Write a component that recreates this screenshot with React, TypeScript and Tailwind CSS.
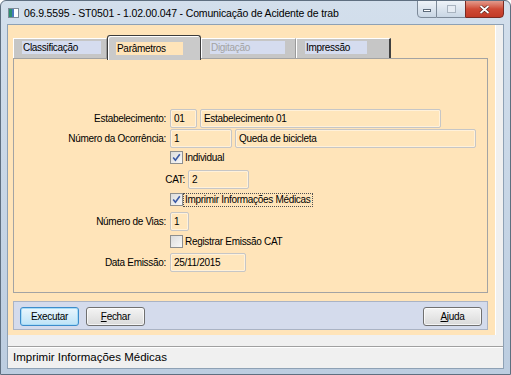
import React from 'react';

const formFont = "font-['Liberation_Sans',Arial,sans-serif] text-[10px] tracking-[-0.3px] text-black";

function Field({ className, value }: { className: string; value: string }) {
  return (
    <div
      className={`h-[19px] shrink-0 border border-[#c6c6c6] rounded-[2px] bg-[#ffe6bc] px-[3px] flex items-center shadow-[inset_0_0_0_1px_rgba(255,255,255,0.45)] ${className}`}
    >
      {value}
    </div>
  );
}

function CheckBox({ checked }: { checked: boolean }) {
  return (
    <div className="w-[13px] h-[13px] shrink-0 border border-[#8e8f8f] bg-gradient-to-br from-[#dcdcdc] to-[#f8f8f8] flex items-center justify-center">
      {checked && (
        <svg width="9" height="9" viewBox="0 0 9 9">
          <path d="M1.2 4.6 L3.4 7.2 L7.8 1.2" fill="none" stroke="#3b5aa5" strokeWidth="1.6" />
        </svg>
      )}
    </div>
  );
}

function Tab({ label, width, labelWidth, disabled, last }: { label: string; width: string; labelWidth: string; disabled?: boolean; last?: boolean }) {
  return (
    <div
      className={`${width} h-[20px] mt-[3px] bg-[#c6c6c6] border-l border-t border-l-white border-t-white ${last ? 'border-r-2 border-r-[#404040]' : 'border-r border-r-[#9a9a9a]'} pl-[8px] pt-[2px]`}
    >
      <div className={`${labelWidth} h-[13px] bg-[#d5dcef] flex items-center pl-[1px] ${disabled ? 'text-[#a3a3a3]' : 'text-black'}`}>
        {label}
      </div>
    </div>
  );
}

function WinButton({ label, mnemonic, focused }: { label: string; mnemonic?: boolean; focused?: boolean }) {
  return (
    <div
      className={`w-[59px] h-[19px] rounded-[3px] border flex items-center justify-center ${
        focused
          ? 'border-[#3c8ccb] bg-gradient-to-b from-[#eaf6fd] to-[#bde3f7] shadow-[inset_0_0_0_1px_#a7dcf6]'
          : 'border-[#707070] bg-gradient-to-b from-[#f4f4f4] to-[#dadada] shadow-[inset_0_0_0_1px_rgba(255,255,255,0.7)]'
      }`}
    >
      {mnemonic ? (
        <span>
          <span className="underline">{label[0]}</span>
          {label.slice(1)}
        </span>
      ) : (
        label
      )}
    </div>
  );
}

export default function App() {
  return (
    <div className="w-[511px] h-[375px] bg-gradient-to-b from-[#d3dfec] to-[#bccde0] border border-[#5f6f80] rounded-t-[6px] flex flex-col overflow-hidden">
      {/* title bar */}
      <div className="h-[23px] flex items-start shrink-0">
        <div className="ml-[7px] mt-[7px] w-[11px] h-[10px] border border-[#7f8c99] bg-white flex">
          <div className="w-[3px] h-full bg-[#2f8f6f]" />
          <div className="w-[2px] h-full bg-[#4a78c0]" />
        </div>
        <div className="ml-[5px] mt-[5px] font-['Liberation_Sans',Arial,sans-serif] text-[10.5px] tracking-[-0.15px] text-black">
          06.9.5595 - ST0501 - 1.02.00.047 - Comunicação de Acidente de trab
        </div>
        <div className="ml-auto mr-[6px] -mt-[1px] flex h-[18px]">
          <div className="w-[20px] h-full border border-[#7d8a99] rounded-bl-[4px] bg-gradient-to-b from-[#eef3f8] to-[#c9d6e4] flex items-center justify-center">
            <div className="w-[8px] h-[3px] border border-[#5c6a7a] bg-white mt-[3px]" />
          </div>
          <div className="w-[28px] h-full border-y border-[#7d8a99] bg-gradient-to-b from-[#eef3f8] to-[#c9d6e4] flex items-center justify-center">
            <div className="w-[9px] h-[8px] border border-[#a9b4c0] bg-[#e6ecf3]" />
          </div>
          <div className="w-[39px] h-full border border-[#7a2a22] rounded-br-[4px] bg-gradient-to-b from-[#e29a8c] via-[#cf4a36] to-[#c23a26] flex items-center justify-center">
            <svg width="11" height="9" viewBox="0 0 11 9">
              <path d="M1.5 1 L9.5 8 M9.5 1 L1.5 8" stroke="#4a1a14" strokeWidth="3" />
              <path d="M1.5 1 L9.5 8 M9.5 1 L1.5 8" stroke="#ffffff" strokeWidth="1.8" />
            </svg>
          </div>
        </div>
      </div>

      {/* client area */}
      <div className="mx-[6px] h-[345px] border border-[#8ea1b5] bg-[#f0f0f0] flex flex-col">
        <div className="h-[310px] flex shrink-0">
          <div className={`w-[487px] h-full bg-[#ffe4b9] pl-[5px] pt-[10px] flex flex-col ${formFont}`}>
            {/* tabs */}
            <div className="h-[23px] flex relative z-10">
              <Tab label="Classificação" width="w-[94px]" labelWidth="w-[79px]" />
              <div className="w-[94px] h-[25px] bg-[#cacaca] border border-[#3c3c3c] border-b-0 rounded-t-[3px] shadow-[inset_1px_1px_0_#ffffff] pl-[8px] pt-[6px]">
                <div className="w-[67px] h-[13px] bg-[#ffe4b9] flex items-center pl-[1px]">Parâmetros</div>
              </div>
              <Tab label="Digitação" width="w-[95px]" labelWidth="w-[75px]" disabled />
              <Tab label="Impressão" width="w-[95px]" labelWidth="w-[62px]" last />
            </div>

            {/* panel */}
            <div className="w-[475px] h-[235px] border border-[#a3a3a3] pt-[50px] flex flex-col shrink-0">
              <div className="h-[19px] flex items-center">
                <div className="w-[152px] text-right">Estabelecimento:</div>
                <Field className="ml-[4px] w-[27px]" value="01" />
                <Field className="ml-[3px] w-[241px]" value="Estabelecimento 01" />
              </div>
              <div className="h-[19px] mt-[1px] flex items-center">
                <div className="w-[152px] text-right">Número da Ocorrência:</div>
                <Field className="ml-[4px] w-[62px]" value="1" />
                <Field className="ml-[3px] w-[241px]" value="Queda de bicicleta" />
              </div>
              <div className="h-[19px] flex items-center pl-[156px]">
                <CheckBox checked />
                <span className="ml-[2px]">Individual</span>
              </div>
              <div className="h-[19px] mt-[3px] flex items-center">
                <div className="w-[171px] text-right">CAT:</div>
                <Field className="ml-[3px] w-[61px]" value="2" />
              </div>
              <div className="h-[21px] flex items-center pl-[156px]">
                <CheckBox checked />
                <span className="ml-[0px] px-[1px] border border-dotted border-[#505050] leading-[12px]">Imprimir Informações Médicas</span>
              </div>
              <div className="h-[19px] mt-[2px] flex items-center">
                <div className="w-[152px] text-right">Número de Vias:</div>
                <Field className="ml-[4px] w-[19px]" value="1" />
              </div>
              <div className="h-[19px] mt-[1px] flex items-center pl-[156px]">
                <CheckBox checked={false} />
                <span className="ml-[2px]">Registrar Emissão CAT</span>
              </div>
              <div className="h-[19px] mt-[2px] flex items-center">
                <div className="w-[152px] text-right">Data Emissão:</div>
                <Field className="ml-[4px] w-[76px]" value="25/11/2015" />
              </div>
            </div>

            {/* buttons */}
            <div className="w-[475px] h-[29px] mt-[8px] border border-[#aab3c4] bg-[#d4dbec] flex items-start pt-[5px] pl-[6px] pr-[5px] shrink-0">
              <WinButton label="Executar" focused />
              <div className="ml-[7px]">
                <WinButton label="Fechar" mnemonic />
              </div>
              <div className="ml-auto">
                <WinButton label="Ajuda" mnemonic />
              </div>
            </div>
          </div>
          <div className="flex-1 h-full border-l border-white bg-[#f0f0f0]" />
        </div>
        <div className="h-[11px] shrink-0" />
        <div className="h-[22px] border-t border-[#a0a0a0] shadow-[inset_0_1px_0_#ffffff] flex items-center pl-[5px] font-['Liberation_Sans',Arial,sans-serif] text-[11.5px] text-black">
          Imprimir Informações Médicas
        </div>
      </div>
    </div>
  );
}
